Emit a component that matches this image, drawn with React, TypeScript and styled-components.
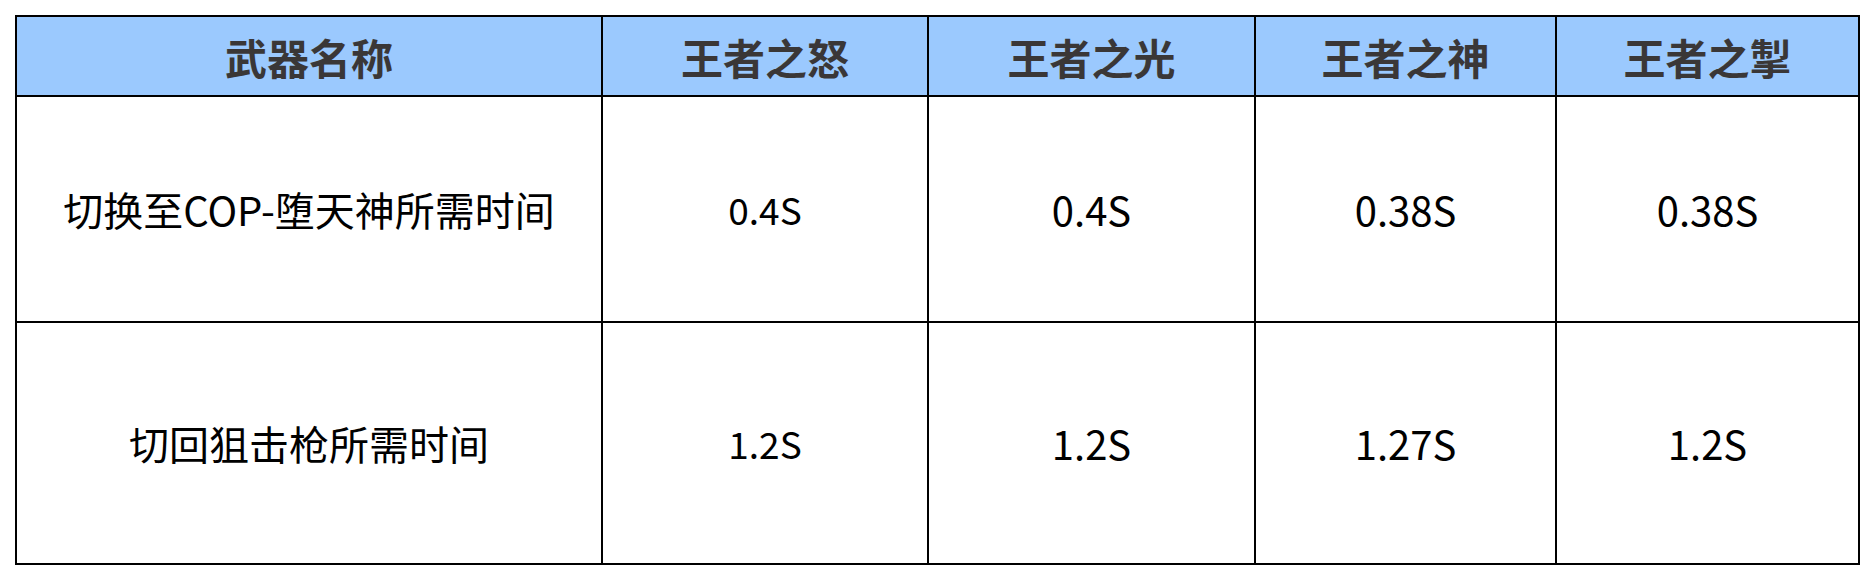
import React from 'react'
import styled, { createGlobalStyle } from 'styled-components'

const Global = createGlobalStyle`
  html, body {
    margin: 0;
    padding: 0;
    background: #fff;
  }
  body {
    font-family: "Noto Sans CJK SC", "Noto Sans", sans-serif;
  }
`

const Page = styled.div`
  padding: 15px;
`

const Grid = styled.div`
  display: grid;
  grid-template-columns: 584px 324px 325px 299px 301px;
  grid-template-rows: 78px 224px 240px;
  gap: 2px;
  padding: 2px;
  background: #000;
  width: max-content;
`

const HeadCell = styled.div`
  display: flex;
  align-items: center;
  justify-content: center;
  background: #9bc9fe;
  color: #3a3737;
  font-size: 42px;
  font-weight: 700;
`

const Cell = styled.div<{ $size?: number }>`
  display: flex;
  align-items: center;
  justify-content: center;
  background: #fff;
  color: #000;
  font-size: ${(p) => p.$size ?? 40}px;
`

const heads = ['武器名称', '王者之怒', '王者之光', '王者之神', '王者之掣']

const rows = [
  ['切换至COP-堕天神所需时间', '0.4S', '0.4S', '0.38S', '0.38S'],
  ['切回狙击枪所需时间', '1.2S', '1.2S', '1.27S', '1.2S'],
]

const App = () => (
  <>
    <Global />
    <Page>
      <Grid>
        {heads.map((h) => (
          <HeadCell key={h}>{h}</HeadCell>
        ))}
        {rows.map((r, i) =>
          r.map((v, j) => (
            <Cell key={i + '-' + j} $size={j === 1 ? 37 : 40}>
              {v}
            </Cell>
          ))
        )}
      </Grid>
    </Page>
  </>
)

export default App
